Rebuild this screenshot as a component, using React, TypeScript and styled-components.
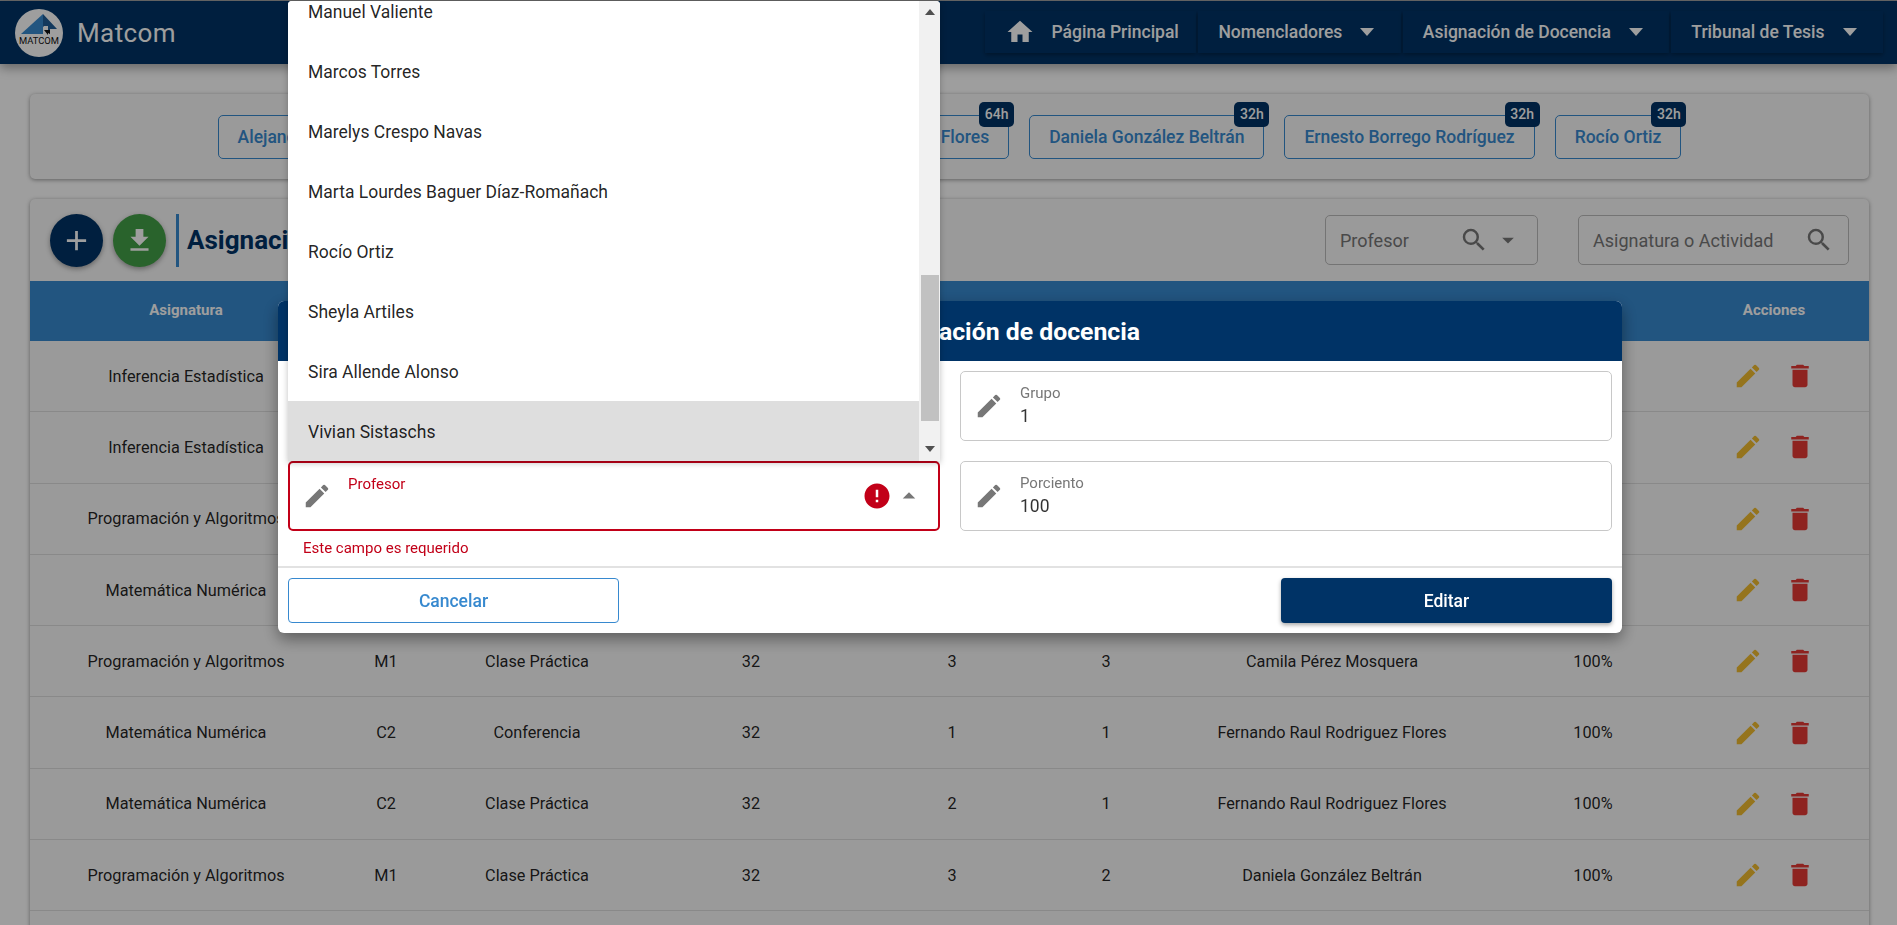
import React from "react";
import styled, { createGlobalStyle } from "styled-components";
import { MdAdd, MdArrowDropDown, MdArrowDropUp, MdDelete, MdEdit, MdError, MdFileDownload, MdHome, MdSearch } from "react-icons/md";

const Global = createGlobalStyle`
  html, body { margin: 0; height: 100%; overflow: hidden; background: #fff; }
  body { font-family: Roboto, "Liberation Sans", sans-serif; color: rgba(0,0,0,.87); }
  * { box-sizing: border-box; }
`;

const NAVY = "#003366";
const BLUE = "#3789cf";
const COLS = "312px 88px 214px 214px 188px 120px 332px 190px 181px";

const Page = styled.div`height: 925px; overflow: hidden; display: flex; flex-direction: column;`;
const TopLine = styled.div`height: 1px; background: #aaa; flex: none;`;
const Header = styled.header`
  height: 63px; flex: none; background: ${NAVY}; display: flex; align-items: center;
  padding: 0 14px 0 15px; box-shadow: 0 4px 10px rgba(0,0,0,.35); position: relative; z-index: 1;
`;
const Brand = styled.div`font-size: 26px; color: #fff; letter-spacing: .4px; margin-left: 14px;`;
const Nav = styled.nav`margin-left: auto; display: flex; gap: 2px; margin-top: -1px;`;
const NavItem = styled.a`
  height: 42px; display: flex; align-items: center; gap: 18px; padding: 0 26.5px 0 20px;
  background: ${NAVY}; color: #fff; font-size: 17.5px; font-weight: 500;
  box-shadow: 0 2px 4px rgba(0,0,0,.3);
`;
const HomeItem = styled(NavItem)`gap: 16.2px; padding: 0 17.6px 0 20.2px;`;
const Main = styled.main`flex: 1; padding: 30px 28px 0 30px; display: flex; flex-direction: column; gap: 20px; background: #fff;`;
const Card = styled.section`background: #f8f8f8; border-radius: 5px; box-shadow: 0 1px 4px rgba(0,0,0,.4);`;
const ChipCard = styled(Card)`height: 85px; flex: none; display: flex; align-items: center; justify-content: center; gap: 20px;`;
const Chip = styled.div`
  height: 44px; position: relative; display: flex; align-items: center; padding: 0 19px;
  border: 1px solid ${BLUE}; border-radius: 5px; color: ${BLUE}; font-size: 17.5px; font-weight: 500; white-space: nowrap;
`;
const Badge = styled.span`
  position: absolute; right: -6px; top: -14px; width: 35px; height: 25px; border-radius: 5px;
  background: ${NAVY}; color: #fff; font-size: 14px; display: flex; align-items: center; justify-content: center;
`;
const TableCard = styled(Card)`flex: 1; overflow: hidden;`;
const Toolbar = styled.div`height: 82px; display: flex; align-items: center; padding: 0 20px;`;
const Fab = styled.button<{ $bg: string }>`
  width: 53px; height: 53px; border: 0; border-radius: 50%; background: ${(p) => p.$bg}; color: #fff; padding: 0;
  display: flex; align-items: center; justify-content: center; margin-right: 10px;
  box-shadow: 0 2px 5px rgba(0,0,0,.35);
`;
const Title = styled.h2`
  margin: 0; height: 53px; line-height: 53px; border-left: 3px solid ${BLUE}; padding-left: 8px;
  color: ${NAVY}; font-size: 26px; font-weight: 700;
`;
const Filters = styled.div`margin-left: auto; display: flex; gap: 40px;`;
const Filter = styled.div<{ $w: number; $pr: number }>`
  width: ${(p) => p.$w}px; height: 50px; border: 1px solid #bbb; border-radius: 5px; display: flex; align-items: center;
  padding: 0 ${(p) => p.$pr}px 0 14px; font-size: 18px; color: #777;
`;
const FilterText = styled.span`flex: 1;`;
const GrayIcon = styled.span`display: flex; color: #777;`;
const CaretGap = styled(GrayIcon)`margin-left: 5px;`;
const Row = styled.div`
  display: grid; grid-template-columns: ${COLS}; align-items: center; height: 71.3px;
  border-bottom: 1px solid #ddd; font-size: 16.25px; color: rgba(0,0,0,.87); text-align: center;
`;
const HeadRow = styled(Row)`
  height: 60px; background: ${BLUE}; color: #fff; font-size: 15px; font-weight: 700; border: 0; padding-bottom: 2px;
`;
const Actions = styled.div`display: flex; justify-content: center; gap: 22px; padding-right: 9px;`;
const ActionHead = styled.div`padding-right: 9px;`;
const EditBtn = styled.span`display: flex; color: #f0bc30;`;
const DelBtn = styled.span`display: flex; color: #e53935;`;

const Overlay = styled.div`position: fixed; inset: 0; background: rgba(0,0,0,.38); z-index: 10;`;
const Dialog = styled.div`
  position: absolute; left: 278px; top: 301px; width: 1344px; background: #fff; border-radius: 6px; overflow: hidden;
  box-shadow: 0 6px 16px rgba(0,0,0,.4);
`;
const DialogHead = styled.div`
  height: 60px; background: ${NAVY}; color: #fff; font-size: 24.8px; font-weight: 700;
  display: flex; align-items: center; justify-content: center;
`;
const DialogBody = styled.div`height: 205px; padding: 10px 10px 0;`;
const FormGrid = styled.div`display: grid; grid-template-columns: 652px 652px; gap: 20px;`;
const Field = styled.div<{ $error?: boolean }>`
  height: 70px; display: flex; align-items: center; gap: 16px; border-radius: 5px;
  border: ${(p) => (p.$error ? "2px solid #c20018" : "1px solid #c8c8c8")};
  padding: 0 ${(p) => (p.$error ? "14px 0 12px" : "15px 0 13px")};
`;
const FieldBody = styled.div`flex: 1; height: 100%; padding-top: 11px;`;
const FieldLabel = styled.div<{ $error?: boolean }>`
  font-size: 15px; line-height: 20px; height: 20px; color: ${(p) => (p.$error ? "#c20018" : "#777")};
`;
const FieldValue = styled.div`font-size: 17.5px; line-height: 24px; color: rgba(0,0,0,.8); margin-top: 1px;`;
const Trailing = styled.div`display: flex; align-items: center; gap: 2px; color: #777;`;
const ErrorIcon = styled.span`display: flex; color: #c20018;`;
const ErrorText = styled.div`font-size: 15px; color: #c20018; line-height: 20px; margin: 7px 0 0 15px;`;
const DialogFoot = styled.div`
  border-top: 2px solid #e2e2e2; padding: 10px; display: flex; justify-content: space-between;
`;
const OutlineBtn = styled.button`
  width: 331px; height: 45px; background: #fff; border: 1px solid ${BLUE}; border-radius: 4px; color: ${BLUE};
  font: 500 17.5px Roboto, sans-serif;
`;
const SolidBtn = styled.button`
  width: 331px; height: 45px; background: ${NAVY}; border: 0; border-radius: 4px; color: #fff;
  font: 500 17.5px Roboto, sans-serif; box-shadow: 0 2px 4px rgba(0,0,0,.35);
`;
const Menu = styled.div`
  position: absolute; left: 288px; top: 1px; width: 652px; height: 460px; background: #fff; border-radius: 4px 4px 0 0;
  display: flex; overflow: hidden; box-shadow: 0 2px 6px rgba(0,0,0,.25);
`;
const MenuList = styled.div`flex: 1; display: flex; flex-direction: column; justify-content: flex-end; overflow: hidden;`;
const MenuItem = styled.div<{ $active?: boolean }>`
  height: 60px; flex: none; display: flex; align-items: center; padding: 2px 0 0 20px; font-size: 17.5px;
  background: ${(p) => (p.$active ? "#dedede" : "#fff")}; color: rgba(0,0,0,.87);
`;
const Scrollbar = styled.div`width: 21px; flex: none; background: #f1f1f1; display: flex; flex-direction: column; align-items: center;`;
const ScrollUp = styled.svg`margin-top: 8px;`;
const Thumb = styled.div`width: 18px; height: 146px; background: #c1c1c1; margin-top: auto;`;
const ScrollDown = styled.svg`margin: 25px 0 9px;`;

const Logo = () => (
  <svg width="48" height="48" viewBox="0 0 48 48" aria-hidden="true">
    <circle cx="24" cy="24" r="24" fill="#fff" />
    <polygon points="6,25 28,5 28,25" fill="#3789cf" />
    <polygon points="28,5 42,20 35,20 35,25 28,17" fill="#1f5c96" />
    <rect x="29" y="17" width="4" height="4" fill="#fff" />
    <polygon points="29,21 35,21 35,25 33,24 33,26" fill="#111" />
    <text x="24" y="35" textAnchor="middle" fontSize="9.4" fontFamily="Roboto, sans-serif" fill="#111">MATCOM</text>
  </svg>
);
const NavCaret = () => (
  <svg width="14" height="8" viewBox="0 0 14 8" aria-hidden="true"><polygon points="0,0 14,0 7,8" fill="#fff" /></svg>
);

const rows = [
  ["Inferencia Estadística", "C1", "Conferencia", "32", "1", "1", "Sira Allende Alonso", "100%"],
  ["Inferencia Estadística", "C1", "Clase Práctica", "32", "2", "1", "Sira Allende Alonso", "100%"],
  ["Programación y Algoritmos", "M1", "Conferencia", "64", "1", "1", "Alejandro Mesejo Chiong", "100%"],
  ["Matemática Numérica", "C2", "Clase Práctica", "32", "2", "2", "Rocío Ortiz", "100%"],
  ["Programación y Algoritmos", "M1", "Clase Práctica", "32", "3", "3", "Camila Pérez Mosquera", "100%"],
  ["Matemática Numérica", "C2", "Conferencia", "32", "1", "1", "Fernando Raul Rodriguez Flores", "100%"],
  ["Matemática Numérica", "C2", "Clase Práctica", "32", "2", "1", "Fernando Raul Rodriguez Flores", "100%"],
  ["Programación y Algoritmos", "M1", "Clase Práctica", "32", "3", "2", "Daniela González Beltrán", "100%"],
  ["Programación y Algoritmos", "M1", "Clase Práctica", "32", "3", "1", "Ernesto Borrego Rodríguez", "100%"],
];
const chips = [
  ["Alejandro Mesejo Chiong", "64h"],
  ["Camila Pérez Mosquera", "32h"],
  ["Fernando Raul Rodriguez Flores", "64h"],
  ["Daniela González Beltrán", "32h"],
  ["Ernesto Borrego Rodríguez", "32h"],
  ["Rocío Ortiz", "32h"],
];
const teachers = ["Manuel Valiente", "Marcos Torres", "Marelys Crespo Navas", "Marta Lourdes Baguer Díaz-Romañach", "Rocío Ortiz", "Sheyla Artiles", "Sira Allende Alonso", "Vivian Sistaschs"];
const heads = ["Asignatura", "Grupo", "Actividad", "Horas", "Grupo", "Turno", "Profesor", "%"];

const FormField = ({ label, value }: { label: string; value: string }) => (
  <Field>
    <GrayIcon><MdEdit size={30} /></GrayIcon>
    <FieldBody><FieldLabel>{label}</FieldLabel><FieldValue>{value}</FieldValue></FieldBody>
  </Field>
);

export default function App() {
  return (
    <Page>
      <Global />
      <TopLine />
      <Header>
        <Logo />
        <Brand>Matcom</Brand>
        <Nav>
          <HomeItem><MdHome size={30} />Página Principal</HomeItem>
          <NavItem>Nomencladores<NavCaret /></NavItem>
          <NavItem>Asignación de Docencia<NavCaret /></NavItem>
          <NavItem>Tribunal de Tesis<NavCaret /></NavItem>
        </Nav>
      </Header>
      <Main>
        <ChipCard>
          {chips.map(([n, h]) => <Chip key={n}>{n}<Badge>{h}</Badge></Chip>)}
        </ChipCard>
        <TableCard>
          <Toolbar>
            <Fab $bg={NAVY}><MdAdd size={33} /></Fab>
            <Fab $bg="#43a047"><MdFileDownload size={31} /></Fab>
            <Title>Asignación de Docencia</Title>
            <Filters>
              <Filter $w={213} $pr={15}>
                <FilterText>Profesor</FilterText>
                <GrayIcon><MdSearch size={30} /></GrayIcon>
                <CaretGap><MdArrowDropDown size={28} /></CaretGap>
              </Filter>
              <Filter $w={271} $pr={14}>
                <FilterText>Asignatura o Actividad</FilterText>
                <GrayIcon><MdSearch size={30} /></GrayIcon>
              </Filter>
            </Filters>
          </Toolbar>
          <HeadRow>
            {heads.map((h, i) => <div key={i}>{h}</div>)}
            <ActionHead>Acciones</ActionHead>
          </HeadRow>
          {rows.map((r, i) => (
            <Row key={i}>
              {r.map((c, j) => <div key={j}>{c}</div>)}
              <Actions>
                <EditBtn><MdEdit size={30} /></EditBtn>
                <DelBtn><MdDelete size={30} /></DelBtn>
              </Actions>
            </Row>
          ))}
        </TableCard>
      </Main>
      <Overlay>
        <Dialog>
          <DialogHead>Editar una asignación de docencia</DialogHead>
          <DialogBody>
            <FormGrid>
              <FormField label="Asignatura" value="Inferencia Estadística" />
              <FormField label="Grupo" value="1" />
              <Field $error>
                <GrayIcon><MdEdit size={30} /></GrayIcon>
                <FieldBody><FieldLabel $error>Profesor</FieldLabel></FieldBody>
                <Trailing>
                  <ErrorIcon><MdError size={30} /></ErrorIcon>
                  <MdArrowDropUp size={30} />
                </Trailing>
              </Field>
              <FormField label="Porciento" value="100" />
            </FormGrid>
            <ErrorText>Este campo es requerido</ErrorText>
          </DialogBody>
          <DialogFoot>
            <OutlineBtn>Cancelar</OutlineBtn>
            <SolidBtn>Editar</SolidBtn>
          </DialogFoot>
        </Dialog>
        <Menu>
          <MenuList>
            {teachers.map((t) => <MenuItem key={t} $active={t === "Vivian Sistaschs"}>{t}</MenuItem>)}
          </MenuList>
          <Scrollbar>
            <ScrollUp width="10" height="6" viewBox="0 0 10 6"><polygon points="5,0 10,6 0,6" fill="#505050" /></ScrollUp>
            <Thumb />
            <ScrollDown width="10" height="6" viewBox="0 0 10 6"><polygon points="0,0 10,0 5,6" fill="#505050" /></ScrollDown>
          </Scrollbar>
        </Menu>
      </Overlay>
    </Page>
  );
}
